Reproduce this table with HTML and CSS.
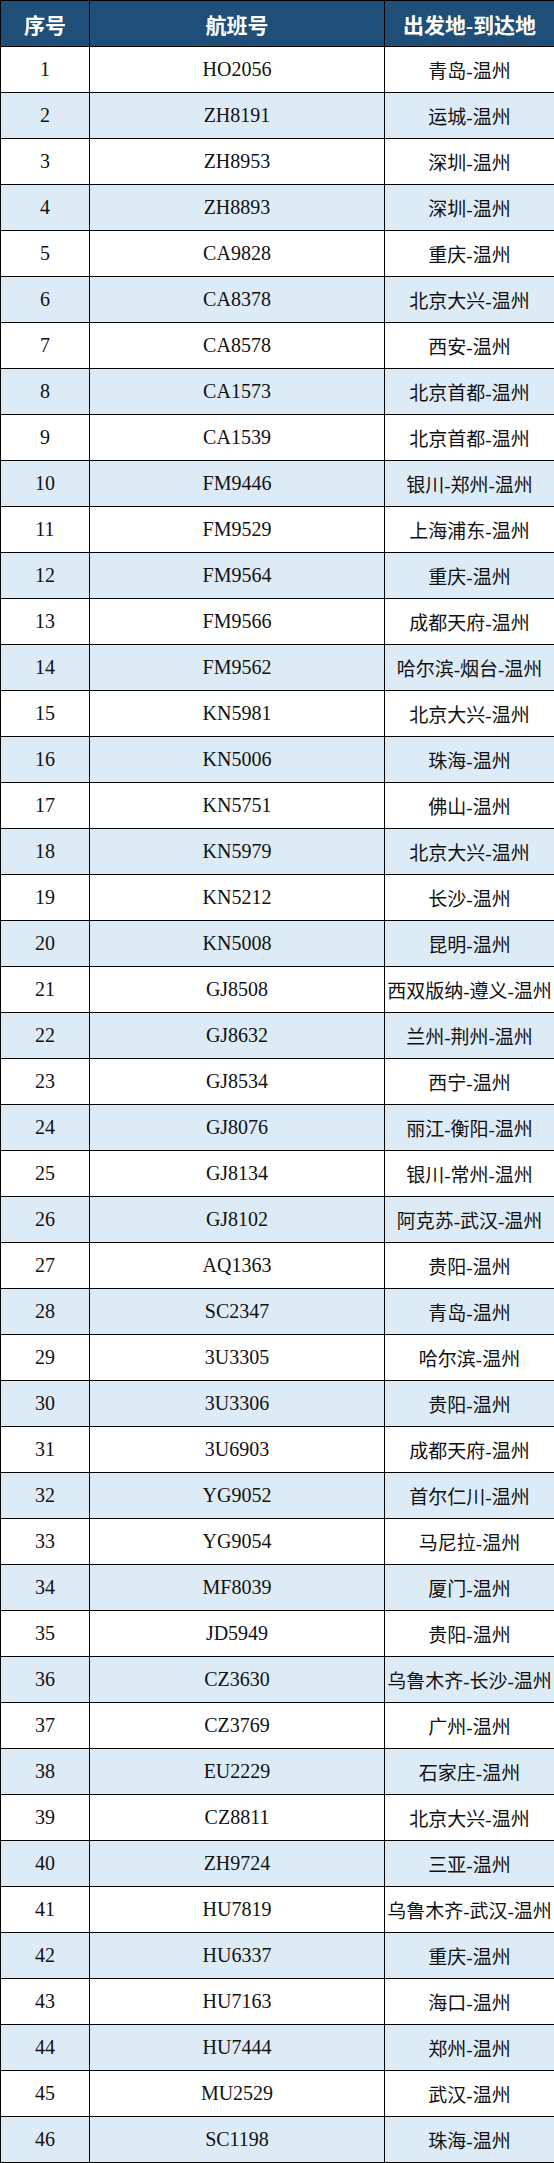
FILE: index.html
```html
<!DOCTYPE html>
<html lang="zh-CN">
<head>
<meta charset="utf-8">
<title>航班表</title>
<link rel="stylesheet" href="styles.css">
</head>
<body>
<table class="flights">
  <colgroup>
    <col class="c-no">
    <col class="c-code">
    <col class="c-route">
  </colgroup>
  <thead>
    <tr><th>序号</th><th>航班号</th><th>出发地-到达地</th></tr>
  </thead>
  <tbody>
    <tr><td>1</td><td>HO2056</td><td>青岛-温州</td></tr>
    <tr><td>2</td><td>ZH8191</td><td>运城-温州</td></tr>
    <tr><td>3</td><td>ZH8953</td><td>深圳-温州</td></tr>
    <tr><td>4</td><td>ZH8893</td><td>深圳-温州</td></tr>
    <tr><td>5</td><td>CA9828</td><td>重庆-温州</td></tr>
    <tr><td>6</td><td>CA8378</td><td>北京大兴-温州</td></tr>
    <tr><td>7</td><td>CA8578</td><td>西安-温州</td></tr>
    <tr><td>8</td><td>CA1573</td><td>北京首都-温州</td></tr>
    <tr><td>9</td><td>CA1539</td><td>北京首都-温州</td></tr>
    <tr><td>10</td><td>FM9446</td><td>银川-郑州-温州</td></tr>
    <tr><td>11</td><td>FM9529</td><td>上海浦东-温州</td></tr>
    <tr><td>12</td><td>FM9564</td><td>重庆-温州</td></tr>
    <tr><td>13</td><td>FM9566</td><td>成都天府-温州</td></tr>
    <tr><td>14</td><td>FM9562</td><td>哈尔滨-烟台-温州</td></tr>
    <tr><td>15</td><td>KN5981</td><td>北京大兴-温州</td></tr>
    <tr><td>16</td><td>KN5006</td><td>珠海-温州</td></tr>
    <tr><td>17</td><td>KN5751</td><td>佛山-温州</td></tr>
    <tr><td>18</td><td>KN5979</td><td>北京大兴-温州</td></tr>
    <tr><td>19</td><td>KN5212</td><td>长沙-温州</td></tr>
    <tr><td>20</td><td>KN5008</td><td>昆明-温州</td></tr>
    <tr><td>21</td><td>GJ8508</td><td>西双版纳-遵义-温州</td></tr>
    <tr><td>22</td><td>GJ8632</td><td>兰州-荆州-温州</td></tr>
    <tr><td>23</td><td>GJ8534</td><td>西宁-温州</td></tr>
    <tr><td>24</td><td>GJ8076</td><td>丽江-衡阳-温州</td></tr>
    <tr><td>25</td><td>GJ8134</td><td>银川-常州-温州</td></tr>
    <tr><td>26</td><td>GJ8102</td><td>阿克苏-武汉-温州</td></tr>
    <tr><td>27</td><td>AQ1363</td><td>贵阳-温州</td></tr>
    <tr><td>28</td><td>SC2347</td><td>青岛-温州</td></tr>
    <tr><td>29</td><td>3U3305</td><td>哈尔滨-温州</td></tr>
    <tr><td>30</td><td>3U3306</td><td>贵阳-温州</td></tr>
    <tr><td>31</td><td>3U6903</td><td>成都天府-温州</td></tr>
    <tr><td>32</td><td>YG9052</td><td>首尔仁川-温州</td></tr>
    <tr><td>33</td><td>YG9054</td><td>马尼拉-温州</td></tr>
    <tr><td>34</td><td>MF8039</td><td>厦门-温州</td></tr>
    <tr><td>35</td><td>JD5949</td><td>贵阳-温州</td></tr>
    <tr><td>36</td><td>CZ3630</td><td>乌鲁木齐-长沙-温州</td></tr>
    <tr><td>37</td><td>CZ3769</td><td>广州-温州</td></tr>
    <tr><td>38</td><td>EU2229</td><td>石家庄-温州</td></tr>
    <tr><td>39</td><td>CZ8811</td><td>北京大兴-温州</td></tr>
    <tr><td>40</td><td>ZH9724</td><td>三亚-温州</td></tr>
    <tr><td>41</td><td>HU7819</td><td>乌鲁木齐-武汉-温州</td></tr>
    <tr><td>42</td><td>HU6337</td><td>重庆-温州</td></tr>
    <tr><td>43</td><td>HU7163</td><td>海口-温州</td></tr>
    <tr><td>44</td><td>HU7444</td><td>郑州-温州</td></tr>
    <tr><td>45</td><td>MU2529</td><td>武汉-温州</td></tr>
    <tr><td>46</td><td>SC1198</td><td>珠海-温州</td></tr>
  </tbody>
</table>
</body>
</html>
```
FILE: styles.css
```css
html, body {
  margin: 0;
  padding: 0;
  background: #ffffff;
}

.flights {
  width: 554px;
  border-collapse: collapse;
  table-layout: fixed;
  font-family: "Liberation Serif", "Noto Sans CJK SC", serif;
  color: #111111;
}

.c-no { width: 89px; }
.c-code { width: 295px; }
.c-route { width: 170px; }

.flights th,
.flights td {
  height: 46px;
  padding: 0;
  border: 1px solid #000000;
  text-align: center;
  vertical-align: middle;
  white-space: nowrap;
  overflow: hidden;
  box-sizing: border-box;
}

.flights th {
  background: #1f4e79;
  color: #ffffff;
  font-size: 21px;
  font-weight: bold;
}

.flights td {
  font-size: 20px;
  font-weight: normal;
}

.flights td:nth-child(3) {
  font-size: 19px;
}

.flights tbody tr:nth-child(even) td {
  background: #ddebf7;
}
```
